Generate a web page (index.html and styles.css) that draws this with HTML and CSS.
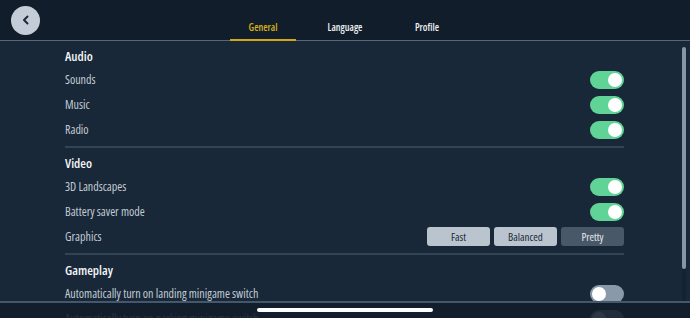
FILE: index.html
```html
<!DOCTYPE html>
<html lang="en">
<head>
    <meta charset="utf-8">
    <link rel="stylesheet" href="styles.css">
    <title>Settings</title>
</head>
<body>
<div class="app">
    <div class="topbar">
        <div class="back">
            <svg width="10" height="10" viewBox="0 0 10 10"><polyline points="6.5,1.5 3,5 6.5,8.5" fill="none" stroke="#1b2a3a" stroke-width="2" stroke-linecap="round" stroke-linejoin="round"/></svg>
        </div>
        <div class="tabs">
            <div class="tab active">General</div>
            <div class="tab">Language</div>
            <div class="tab">Profile</div>
        </div>
        <div></div>
    </div>

    <div class="content">
        <div class="section">
            <div class="heading">Audio</div>
            <div class="row"><span>Sounds</span><div class="toggle on"></div></div>
            <div class="row"><span>Music</span><div class="toggle on"></div></div>
            <div class="row"><span>Radio</span><div class="toggle on"></div></div>
        </div>
        <div class="section">
            <div class="heading">Video</div>
            <div class="row"><span>3D Landscapes</span><div class="toggle on"></div></div>
            <div class="row"><span>Battery saver mode</span><div class="toggle on"></div></div>
            <div class="row"><span>Graphics</span>
                <div class="segments">
                    <div class="seg">Fast</div>
                    <div class="seg">Balanced</div>
                    <div class="seg selected">Pretty</div>
                </div>
            </div>
        </div>
        <div class="section">
            <div class="heading">Gameplay</div>
            <div class="row"><span>Automatically turn on landing minigame switch</span><div class="toggle"></div></div>
            <div class="row"><span>Automatically turn on parking minigame switch</span><div class="toggle"></div></div>
        </div>
    </div>

    <div class="scrollbar"><div class="thumb"></div></div>

    <div class="homebar"><div class="pill"></div></div>
</div>
</body>
</html>
```

FILE: styles.css
```css
body{
    margin: 0;
    background-color: #182838;
    font-family: "Open Sans", "DejaVu Sans", sans-serif;
    font-stretch: 75%;
    color: #c3cbd4;
}
.app{
    position: relative;
    width: 690px;
    height: 318px;
    overflow: hidden;
}

.topbar{
    height: 40px;
    background-color: #111d2a;
    border-bottom: 1px solid #56687a;
    display: grid;
    grid-template-columns: 1fr auto 1fr;
    align-items: center;
    padding: 0 11px;
}
.back{
    width: 29px;
    height: 29px;
    border-radius: 50%;
    background-color: #c4cdd7;
    display: flex;
    align-items: center;
    justify-content: center;
}
.tabs{
    display: flex;
    gap: 16px;
    height: 40px;
}
.tab{
    width: 66px;
    font-size: 10px;
    font-weight: 600;
    color: #eef1f4;
    display: flex;
    align-items: center;
    justify-content: center;
    padding-top: 14px;
    box-sizing: border-box;
}
.tab.active{
    color: #d8b21c;
    border-bottom: 2px solid #d1a817;
    margin-bottom: -1px;
}

.content{
    padding: 0 66px 0 65px;
}
.section{
    padding: 4px 0;
    border-bottom: 2px solid #334455;
}
.heading{
    height: 22px;
    line-height: 22px;
    font-size: 13px;
    font-weight: 600;
    color: #f4f6f8;
}
.row{
    height: 25px;
    display: flex;
    align-items: center;
    justify-content: space-between;
    font-size: 12px;
}

.toggle{
    width: 34px;
    height: 18px;
    border-radius: 9px;
    background-color: #8a99aa;
    position: relative;
}
.toggle::after{
    content: "";
    position: absolute;
    top: 2px;
    left: 2px;
    width: 14px;
    height: 14px;
    border-radius: 50%;
    background-color: #fff;
}
.toggle.on{
    background-color: #60d496;
}
.toggle.on::after{
    left: 18px;
}

.segments{
    display: flex;
    gap: 4px;
}
.seg{
    width: 63px;
    height: 19px;
    border-radius: 3px;
    background-color: #b9c4cf;
    color: #1d2b3a;
    font-size: 11px;
    font-weight: 500;
    display: flex;
    align-items: center;
    justify-content: center;
}
.seg.selected{
    background-color: #485868;
    color: #e3e8ed;
}

.scrollbar{
    position: absolute;
    right: 4px;
    top: 47px;
    width: 4px;
    height: 255px;
    background-color: #142231;
}
.thumb{
    height: 222px;
    background-color: #8696a7;
    border-radius: 2px;
}

.homebar{
    position: absolute;
    left: 0;
    right: 0;
    bottom: 0;
    height: 15px;
    background-color: rgba(17, 29, 42, 0.88);
    border-top: 2px solid #45576a;
}
.pill{
    width: 176px;
    height: 4px;
    border-radius: 2px;
    background-color: #fff;
    margin: 5px auto 0;
}
```
